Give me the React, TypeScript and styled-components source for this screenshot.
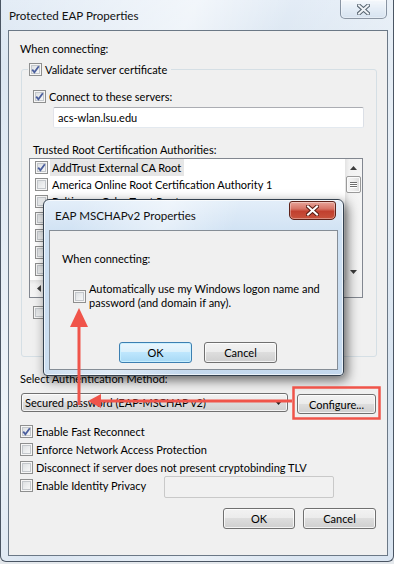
import styled, { createGlobalStyle } from "styled-components";

const GlobalStyle = createGlobalStyle`
  html, body {
    margin: 0;
    padding: 0;
  }
  body {
    width: 394px;
    height: 564px;
    overflow: hidden;
    background: #e4e8ec;
    font-family: Lato, "Liberation Sans", sans-serif;
    font-size: 11px;
    line-height: 15px;
    color: #000;
  }
  * {
    box-sizing: border-box;
  }
`;

const Window = styled.div`
  position: relative;
  width: 394px;
  height: 562px;
  display: flex;
  flex-direction: column;
  padding: 0 5px 5px 7px;
  border: 1px solid #4a5563;
  border-top: none;
  border-radius: 0 0 6px 6px;
  background: linear-gradient(
      115deg,
      rgba(255, 255, 255, 0) 0%,
      rgba(255, 255, 255, 0.55) 30%,
      rgba(255, 255, 255, 0) 45%,
      rgba(255, 255, 255, 0.4) 70%,
      rgba(255, 255, 255, 0) 85%
    ),
    linear-gradient(180deg, #e3ecf6 0%, #d8e4f0 12%, #dae5f1 100%);
`;

const TitleBar = styled.div`
  flex: none;
  height: 30px;
  display: flex;
  align-items: center;
  justify-content: space-between;
  padding-left: ${(p: { $inset?: number }) => p.$inset ?? 1}px;
`;

const TitleText = styled.span`
  font-size: 11.6px;
  color: #111;
`;

const CloseButton = styled.div<{ $active?: boolean }>`
  flex: none;
  align-self: flex-start;
  width: 47px;
  height: 19px;
  margin: ${(p) => (p.$active ? "1px 2px 0 0" : "0 1px 0 0")};
  border: 1px solid ${(p) => (p.$active ? "#5e2219" : "rgba(70, 86, 106, 0.6)")};
  border-top-width: ${(p) => (p.$active ? 1 : 0)}px;
  border-radius: ${(p) => (p.$active ? "3px 3px 5px 5px" : "0 0 5px 5px")};
  background: ${(p) =>
    p.$active
      ? "linear-gradient(180deg, #e7a499 0%, #d77466 40%, #c1402f 55%, #c8533d 100%)"
      : "linear-gradient(180deg, rgba(255,255,255,0.55) 0%, rgba(226,236,246,0.5) 50%, rgba(205,220,236,0.6) 100%)"};
  box-shadow: inset 0 0 0 1px rgba(255, 255, 255, 0.35);
  display: flex;
  align-items: center;
  justify-content: center;
`;

const Client = styled.div`
  flex: 1;
  display: flex;
  flex-direction: column;
  padding: 10px 10px 0 11px;
  border: 1px solid #6b7886;
  background: #f0f0f0;
`;

const Text = styled.div<{ $top?: number; $left?: number }>`
  margin-top: ${(p) => p.$top ?? 0}px;
  margin-left: ${(p) => p.$left ?? 0}px;
  white-space: nowrap;
`;

const Group = styled.fieldset`
  margin: 6px 0 0 1px;
  padding: 0;
  height: 295px;
  min-width: 0;
  border: 1px solid #d5dfe5;
  border-radius: 3px;
  display: flex;
  flex-direction: column;
`;

const Legend = styled.legend`
  margin-left: 6px;
  padding: 0 4px 0 1px;
  height: 15px;
  display: flex;
  align-items: center;
  gap: 3px;
`;

const CheckRow = styled.div<{ $top?: number; $left?: number; $height?: number }>`
  display: flex;
  align-items: center;
  gap: 3px;
  height: ${(p) => p.$height ?? 15}px;
  margin-top: ${(p) => p.$top ?? 0}px;
  margin-left: ${(p) => p.$left ?? 0}px;
  white-space: nowrap;
`;

const Box = styled.span`
  flex: none;
  width: 13px;
  height: 13px;
  border: 1px solid #8e8f8f;
  background: linear-gradient(135deg, #d6d9dc 0%, #eceeef 55%, #fbfbfb 100%);
  box-shadow: inset 0 0 0 1px #f6f6f6, inset 0 0 0 2px #c3c7cb;
  display: flex;
  align-items: center;
  justify-content: center;
`;

const TextInput = styled.div<{ $left?: number; $width: number; $disabled?: boolean }>`
  height: 21px;
  width: ${(p) => p.$width}px;
  margin-left: ${(p) => p.$left ?? 0}px;
  padding: 2px 0 0 4px;
  border: 1px solid;
  border-color: ${(p) =>
    p.$disabled ? "#c9c9c9" : "#abadb3 #dbdfe6 #e3e9ef #e2e3ea"};
  border-radius: 2px;
  background: ${(p) => (p.$disabled ? "#f1f1f1" : "#fff")};
`;

const ListBox = styled.div`
  margin: 1px 0 0 7px;
  width: 334px;
  height: 140px;
  border: 1px solid #828790;
  background: #fff;
  display: grid;
  grid-template-columns: 1fr 17px;
  grid-template-rows: 1fr 17px;
  overflow: hidden;
`;

const ListItems = styled.div`
  overflow: hidden;
`;

const ListRow = styled.div`
  height: 17px;
  display: flex;
  align-items: center;
  padding-left: 5px;
  white-space: nowrap;
`;

const ItemLabel = styled.span<{ $selected?: boolean }>`
  margin-left: 2px;
  padding: 1px 3px 1px 2px;
  background: ${(p) => (p.$selected ? "#e6e6e6" : "transparent")};
`;

const ScrollBar = styled.div<{ $horizontal?: boolean }>`
  display: grid;
  ${(p) =>
    p.$horizontal
      ? "grid-template-columns: 17px 1fr 17px;"
      : "grid-template-rows: 17px 1fr 17px;"}
  background: linear-gradient(
    ${(p) => (p.$horizontal ? "180deg" : "90deg")},
    #e3e3e3 0%,
    #f2f2f2 25%,
    #f5f5f5 100%
  );
`;

const ScrollArrow = styled.div`
  display: flex;
  align-items: center;
  justify-content: center;
`;

const Thumb = styled.div`
  margin: 0 1px 0 1px;
  height: 17px;
  border: 1px solid #9a9a9a;
  border-radius: 2px;
  background: linear-gradient(90deg, #f6f6f6 0%, #ececec 50%, #dcdcdc 100%);
  box-shadow: inset 0 0 0 1px #fbfbfb;
  display: flex;
  flex-direction: column;
  align-items: center;
  justify-content: center;
  gap: 1px;
`;

const Grip = styled.span`
  width: 7px;
  height: 1px;
  background: #6e6e6e;
  box-shadow: 0 1px 0 #fff;
`;

const Corner = styled.div`
  background: #f0f0f0;
`;

const ComboRow = styled.div`
  display: flex;
  align-items: flex-start;
  gap: 9px;
  margin: 7px 0 0 1px;
`;

const Button = styled.div<{ $width: number; $default?: boolean; $height?: number }>`
  flex: none;
  width: ${(p) => p.$width}px;
  height: ${(p) => p.$height ?? 21}px;
  border: 1px solid ${(p) => (p.$default ? "#3c7fb1" : "#707070")};
  border-radius: 3px;
  background: ${(p) =>
    p.$default
      ? "linear-gradient(180deg, #eaf6fd 0%, #d9f0fc 49%, #bee6fd 50%, #a7d9f5 100%)"
      : "linear-gradient(180deg, #f2f2f2 0%, #ebebeb 49%, #dddddd 50%, #cfcfcf 100%)"};
  box-shadow: inset 0 0 0 1px
    ${(p) => (p.$default ? "rgba(200, 240, 255, 0.9)" : "rgba(255, 255, 255, 0.75)")};
  display: flex;
  align-items: center;
  justify-content: center;
`;

const Combo = styled(Button)`
  justify-content: space-between;
  padding: 0 5px 0 3px;
`;

const Options = styled.div`
  margin-top: 8px;
  display: flex;
  flex-direction: column;
`;

const PrivacyRow = styled.div`
  display: flex;
  align-items: flex-start;
`;

const PrivacyLabel = styled(CheckRow)`
  width: 144px;
  margin-top: 2px;
  height: 15px;
`;

const Buttons = styled.div<{ $top: number; $left?: number; $gap: number }>`
  display: flex;
  justify-content: ${(p) => (p.$left === undefined ? "flex-end" : "flex-start")};
  gap: ${(p) => p.$gap}px;
  margin-top: ${(p) => p.$top}px;
  margin-left: ${(p) => p.$left ?? 0}px;
  padding-right: 1px;
`;

const Dialog = styled.div`
  position: absolute;
  left: 42px;
  top: 199px;
  width: 301px;
  height: 177px;
  display: flex;
  flex-direction: column;
  padding: 0 5px 5px 5px;
  border: 1px solid #34414f;
  border-radius: 6px 6px 4px 4px;
  background: linear-gradient(
      110deg,
      rgba(255, 255, 255, 0) 10%,
      rgba(255, 255, 255, 0.45) 35%,
      rgba(255, 255, 255, 0) 55%
    ),
    linear-gradient(180deg, #e3eef9 0%, #cfe1f3 20%, #c4d9ee 100%);
  box-shadow: 3px 4px 12px rgba(0, 0, 0, 0.6), inset 0 0 0 1px rgba(255, 255, 255, 0.65);
`;

const DialogClient = styled.div`
  flex: 1;
  display: flex;
  flex-direction: column;
  padding: 20px 12px 0 12px;
  border: 1px solid #858d96;
  background: #f0f0f0;
`;

const WrapRow = styled.div`
  display: flex;
  align-items: center;
  gap: 3px;
  margin: 16px 0 0 11px;
`;

const WrapText = styled.span`
  width: 240px;
  line-height: 14px;
`;

const Annotation = styled.svg`
  position: absolute;
  left: 0;
  top: 0;
  pointer-events: none;
`;

function Check({ on }: { on?: boolean }) {
  return (
    <Box>
      {on && (
        <svg width="9" height="9" viewBox="0 0 9 9">
          <path
            d="M1.2 4.6 L3.4 7.2 L7.8 1.3"
            fill="none"
            stroke="#4b5f9e"
            strokeWidth="1.8"
          />
        </svg>
      )}
    </Box>
  );
}

function CloseGlyph({ active }: { active?: boolean }) {
  return (
    <svg width="13" height="11" viewBox="0 0 13 11">
      <path
        d="M2 1.5 L11 9.5 M11 1.5 L2 9.5"
        stroke={active ? "#5a1d14" : "#56636f"}
        strokeWidth="4"
        strokeLinecap="square"
      />
      <path
        d="M2 1.5 L11 9.5 M11 1.5 L2 9.5"
        stroke={active ? "#ffffff" : "#eef2f6"}
        strokeWidth="2"
        strokeLinecap="square"
      />
    </svg>
  );
}

function Arrow({ dir }: { dir: "up" | "down" | "left" | "right" }) {
  const points = {
    up: "0,4 7,4 3.5,0",
    down: "0,0 7,0 3.5,4",
    left: "4,0 4,7 0,3.5",
    right: "0,0 0,7 4,3.5",
  }[dir];
  const vertical = dir === "up" || dir === "down";
  return (
    <ScrollArrow>
      <svg width={vertical ? 7 : 4} height={vertical ? 4 : 7}>
        <polygon points={points} fill="#3d3d3d" />
      </svg>
    </ScrollArrow>
  );
}

const certificates = [
  { name: "AddTrust External CA Root", checked: true },
  { name: "America Online Root Certification Authority 1" },
  { name: "Baltimore CyberTrust Root" },
  { name: "Class 3 Public Primary Certification Authority" },
  { name: "DigiCert Assured ID Root CA" },
  { name: "DigiCert High Assurance EV Root CA" },
  { name: "Entrust.net Certification Authority (2048)" },
  { name: "Entrust.net Secure Server Certification Authority" },
];

export default function App() {
  return (
    <>
      <GlobalStyle />
      <Window>
        <TitleBar>
          <TitleText>Protected EAP Properties</TitleText>
          <CloseButton>
            <CloseGlyph />
          </CloseButton>
        </TitleBar>
        <Client>
          <Text>When connecting:</Text>
          <Group>
            <Legend>
              <Check on />
              Validate server certificate
            </Legend>
            <CheckRow $top={12} $left={11}>
              <Check on />
              Connect to these servers:
            </CheckRow>
            <TextInput $left={31} $width={311} style={{ marginTop: 3 }}>
              acs-wlan.lsu.edu
            </TextInput>
            <Text $top={14} $left={11}>
              Trusted Root Certification Authorities:
            </Text>
            <ListBox>
              <ListItems>
                {certificates.map((c, i) => (
                  <ListRow key={c.name}>
                    <Check on={c.checked} />
                    <ItemLabel $selected={i === 0}>{c.name}</ItemLabel>
                  </ListRow>
                ))}
              </ListItems>
              <ScrollBar>
                <Arrow dir="up" />
                <div>
                  <Thumb>
                    <Grip />
                    <Grip />
                    <Grip />
                  </Thumb>
                </div>
                <Arrow dir="down" />
              </ScrollBar>
              <ScrollBar $horizontal>
                <Arrow dir="left" />
                <div />
                <Arrow dir="right" />
              </ScrollBar>
              <Corner />
            </ListBox>
            <CheckRow $top={7} $left={11}>
              <Check />
              Do not prompt user to authorize new servers.
            </CheckRow>
          </Group>
          <Text $top={14}>Select Authentication Method:</Text>
          <ComboRow>
            <Combo $width={267} $height={19}>
              <span>Secured password (EAP-MSCHAP v2)</span>
              <svg width="7" height="4">
                <polygon points="0,0 7,0 3.5,4" fill="#222" />
              </svg>
            </Combo>
            <Button $width={79} $height={20} style={{ marginTop: 1 }}>
              Configure...
            </Button>
          </ComboRow>
          <Options>
            <CheckRow $height={18}>
              <Check on />
              Enable Fast Reconnect
            </CheckRow>
            <CheckRow $height={18}>
              <Check />
              Enforce Network Access Protection
            </CheckRow>
            <CheckRow $height={18}>
              <Check />
              Disconnect if server does not present cryptobinding TLV
            </CheckRow>
            <PrivacyRow>
              <PrivacyLabel>
                <Check />
                Enable Identity Privacy
              </PrivacyLabel>
              <TextInput $width={170} $disabled style={{ height: 22 }} />
            </PrivacyRow>
          </Options>
          <Buttons $top={10} $gap={8}>
            <Button $width={72}>OK</Button>
            <Button $width={73}>Cancel</Button>
          </Buttons>
        </Client>

        <Dialog>
          <TitleBar $inset={6}>
            <TitleText>EAP MSCHAPv2 Properties</TitleText>
            <CloseButton $active>
              <CloseGlyph active />
            </CloseButton>
          </TitleBar>
          <DialogClient>
            <Text>When connecting:</Text>
            <WrapRow>
              <Check />
              <WrapText>
                Automatically use my Windows logon name and password (and
                domain if any).
              </WrapText>
            </WrapRow>
            <Buttons $top={32} $left={57} $gap={12}>
              <Button $width={73} $default>
                OK
              </Button>
              <Button $width={73}>Cancel</Button>
            </Buttons>
          </DialogClient>
        </Dialog>

        <Annotation width="394" height="564" viewBox="0 0 394 564">
          <rect
            x="292.5"
            y="387.5"
            width="86"
            height="31"
            fill="none"
            stroke="#f0544a"
            strokeWidth="2.5"
          />
          <path d="M291 401 H97" stroke="#f0544a" strokeWidth="3" />
          <polygon points="87,401 100,394 100,408" fill="#f0544a" />
          <path d="M78 405 V325" stroke="#f0544a" strokeWidth="3" />
          <polygon points="78,308 69,327 87,327" fill="#f0544a" />
        </Annotation>
      </Window>
    </>
  );
}
